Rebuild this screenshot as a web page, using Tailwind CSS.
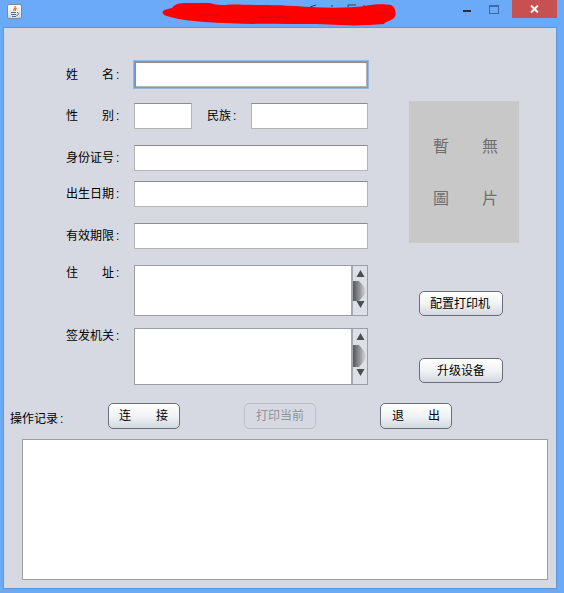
<!DOCTYPE html>
<html lang="zh">
  <head>
    <meta charset="UTF-8" />
    <title>打印程序</title>
    <script src="https://cdn.jsdelivr.net/npm/@tailwindcss/browser@4"></script>
  </head>
  <body class="w-[564px] h-[593px] overflow-hidden bg-[#6aaaf8] text-[12px] leading-[16px] text-black font-['Liberation_Sans','Noto_Sans_CJK_SC',sans-serif]">
    <!-- title bar -->
    <div class="relative flex h-[27px] items-start">
      <div class="ml-[7px] mt-[4px] flex h-[15px] w-[15px] items-center justify-center rounded-[2px] border border-[#7f8a99] bg-gradient-to-b from-white to-[#d5d9df]">
        <svg width="11" height="12" viewBox="0 0 11 12" fill="none">
          <path d="M6 0C7 2 4 3 5 5M7.500 2C6 3 6.500 4 6.500 5" stroke="#e2761b" stroke-width="1.200" />
          <path d="M2 6.500H7M2 8.500H7M3 10.500H7M8 6.500C10.500 6.500 10 9 7.500 9.500" stroke="#51718f" stroke-width="1" />
        </svg>
      </div>
      <!-- scribble hiding the window title -->
      <svg class="absolute left-[160px] top-0" width="240" height="27" viewBox="0 0 240 27">
        <path d="M150 7L156 5M172 7V5M188 7V5H196M204 7V5" stroke="#3a3a3a" stroke-width="1" fill="none" />
        <path d="M3 11C5 9 9 9 12 8C15 4 18 3 28 3L50 3C56 5 60 5 66 5C72 4 84 5 100 5C120 5 136 6 150 7C170 8 190 8 205 6C212 4 225 4 231 5C236 8 237 14 234 18C231 21 226 21 224 24C210 25 195 26 180 25C165 24 150 24 130 24C100 24 70 24 45 22C30 21 15 19 7 16C3 15 2 13 3 11Z" fill="#ff0000" />
        <path d="M40 15H60M100 17H130M160 18H190M218 13H228" stroke="#c81010" stroke-width="1" />
      </svg>
      <div class="ml-auto flex items-start">
        <div class="mr-[18px] mt-[10px] h-[2px] w-[8px] bg-[#26303a]"></div>
        <div class="mr-[13px] mt-[5px] h-[9px] w-[10px] border border-t-2 border-[#3a6aa6]"></div>
        <div class="mr-[7px] flex h-[18px] w-[45px] items-center justify-center bg-[#c75050]">
          <svg width="9" height="8" viewBox="0 0 9 8"><path d="M1 0.500L8 7.500M8 0.500L1 7.500" stroke="white" stroke-width="2" /></svg>
        </div>
      </div>
    </div>

    <!-- client area -->
    <div class="mx-[3px] flex h-[562px] w-[554px] flex-col border border-[#5f97d6] bg-[#d6d9e1]">
      <div class="flex">
        <!-- form -->
        <div class="ml-[62px] mt-[33px] flex w-[302px] flex-col">
          <div class="flex h-[27px] items-center">
            <div class="flex w-[54px] justify-between whitespace-nowrap"><span>姓</span><span>名<span class="inline-block w-[6px] pl-[2px]">:</span></span></div>
            <div class="ml-[14px] h-[27px] w-[234px] border border-[#6ea0d6] bg-white shadow-[0_0_0_1px_#93b8e0,inset_1px_1px_0_#8d8d8d,inset_-1px_-1px_0_#b4b4b4]"></div>
          </div>
          <div class="mt-[15px] flex h-[26px] items-center">
            <div class="flex w-[54px] justify-between whitespace-nowrap"><span>性</span><span>别<span class="inline-block w-[6px] pl-[2px]">:</span></span></div>
            <div class="ml-[14px] h-[26px] w-[58px] border border-[#b4b4b4] border-t-[#8d8d8d] bg-white"></div>
            <span class="ml-[15px] w-[44px] whitespace-nowrap">民族<span class="inline-block w-[6px] pl-[2px]">:</span></span>
            <div class="h-[26px] w-[117px] border border-[#b4b4b4] border-t-[#8d8d8d] bg-white"></div>
          </div>
          <div class="mt-[16px] flex h-[26px] items-center">
            <span class="w-[54px] whitespace-nowrap">身份证号<span class="inline-block w-[6px] pl-[2px]">:</span></span>
            <div class="ml-[14px] h-[26px] w-[234px] border border-[#b4b4b4] border-t-[#8d8d8d] bg-white"></div>
          </div>
          <div class="mt-[10px] flex h-[26px] items-center">
            <span class="w-[54px] whitespace-nowrap">出生日期<span class="inline-block w-[6px] pl-[2px]">:</span></span>
            <div class="ml-[14px] h-[26px] w-[234px] border border-[#b4b4b4] border-t-[#8d8d8d] bg-white"></div>
          </div>
          <div class="mt-[16px] flex h-[26px] items-center">
            <span class="w-[54px] whitespace-nowrap">有效期限<span class="inline-block w-[6px] pl-[2px]">:</span></span>
            <div class="ml-[14px] h-[26px] w-[234px] border border-[#b4b4b4] border-t-[#8d8d8d] bg-white"></div>
          </div>
          <div class="mt-[16px] flex h-[51px] items-start">
            <div class="flex w-[54px] justify-between whitespace-nowrap"><span>住</span><span>址<span class="inline-block w-[6px] pl-[2px]">:</span></span></div>
            <div class="ml-[14px] flex h-[51px] w-[234px] border border-[#9a9ea6] bg-white">
              <div class="flex-1"></div>
              <div class="flex w-[16px] shrink-0 flex-col items-center border-l-2 border-[#a4a8b0] bg-[#dde0e6]">
                <svg class="mt-[3px]" width="9" height="9" viewBox="0 0 9 9"><path d="M4.500 1L8.500 8H0.500Z" fill="#4a4f55" /></svg>
                <svg class="mt-[3px] shrink-0 self-start" width="14" height="20" viewBox="0 0 14 20"><defs><linearGradient id="thumbA" x1="0" x2="1" y1="0" y2="0"><stop offset="0" stop-color="#55575b" /><stop offset="0.5" stop-color="#96989d" /><stop offset="1" stop-color="#e6e8ec" /></linearGradient></defs><path d="M0 0H6C9 3 12 7 14 10C12 13 9 17 6 20H0Z" fill="url(#thumbA)" /></svg>
                <svg class="-mt-[1px]" width="9" height="9" viewBox="0 0 9 9"><path d="M0.500 1H8.500L4.500 8Z" fill="#4a4f55" /></svg>
              </div>
            </div>
          </div>
          <div class="mt-[12px] flex h-[57px] items-start">
            <span class="w-[54px] whitespace-nowrap">签发机关<span class="inline-block w-[6px] pl-[2px]">:</span></span>
            <div class="ml-[14px] flex h-[57px] w-[234px] border border-[#9a9ea6] bg-white">
              <div class="flex-1"></div>
              <div class="flex w-[16px] shrink-0 flex-col items-center border-l-2 border-[#a4a8b0] bg-[#dde0e6]">
                <svg class="mt-[3px]" width="9" height="9" viewBox="0 0 9 9"><path d="M4.500 1L8.500 8H0.500Z" fill="#4a4f55" /></svg>
                <svg class="mt-[4px] shrink-0 self-start" width="14" height="22" viewBox="0 0 14 22"><defs><linearGradient id="thumbB" x1="0" x2="1" y1="0" y2="0"><stop offset="0" stop-color="#55575b" /><stop offset="0.5" stop-color="#96989d" /><stop offset="1" stop-color="#e6e8ec" /></linearGradient></defs><path d="M0 0H6C9 3 12 7 14 11C12 15 9 19 6 22H0Z" fill="url(#thumbB)" /></svg>
                <svg class="mt-[1px]" width="9" height="9" viewBox="0 0 9 9"><path d="M0.500 1H8.500L4.500 8Z" fill="#4a4f55" /></svg>
              </div>
            </div>
          </div>
        </div>

        <!-- photo and side buttons -->
        <div class="ml-[41px] mt-[73px] flex w-[110px] flex-col items-start">
          <div class="grid h-[142px] w-[110px] grid-cols-2 grid-rows-2 bg-[#c8c8c8] pb-[20px] pt-[18px] text-[16px] leading-[16px] text-[#6f6f6f] font-['Noto_Sans_CJK_TC',sans-serif]">
            <span class="flex items-center justify-center pl-[9px]">暫</span>
            <span class="flex items-center justify-center pr-[3px]">無</span>
            <span class="flex items-center justify-center pl-[9px]">圖</span>
            <span class="flex items-center justify-center pr-[3px]">片</span>
          </div>
          <button class="ml-[10px] mt-[48px] h-[25px] w-[84px] rounded-[5px] border border-[#6a6f77] bg-gradient-to-b from-white via-[#f1f3f6] to-[#d3d8e0] pr-[2px]">配置打印机</button>
          <button class="ml-[10px] mt-[43px] h-[25px] w-[84px] -translate-y-[1px] rounded-[5px] border border-[#6a6f77] bg-gradient-to-b from-white via-[#f1f3f6] to-[#d3d8e0]">升级设备</button>
        </div>
      </div>

      <!-- action row -->
      <div class="mt-[18px] flex h-[26px] items-center">
        <span class="ml-[6px] mt-[5px] w-[98px] whitespace-nowrap">操作记录<span class="inline-block w-[6px] pl-[2px]">:</span></span>
        <button class="flex h-[26px] w-[72px] justify-between rounded-[5px] border border-[#6a6f77] bg-gradient-to-b from-white via-[#f1f3f6] to-[#d3d8e0] pl-[10px] pr-[11px] pt-[4px]"><span>连</span><span>接</span></button>
        <button class="ml-[64px] h-[26px] w-[72px] rounded-[5px] border border-[#bcc0c8] bg-[#d6d9e1] text-[#8f9398]" disabled>打印当前</button>
        <button class="ml-[64px] flex h-[26px] w-[72px] justify-between rounded-[5px] border border-[#6a6f77] bg-gradient-to-b from-white via-[#f1f3f6] to-[#d3d8e0] px-[11px] pt-[4px]"><span>退</span><span>出</span></button>
      </div>

      <!-- log -->
      <div class="ml-[18px] mt-[10px] h-[141px] w-[526px] border border-[#9a9ea6] bg-white"></div>
    </div>
  </body>
</html>
